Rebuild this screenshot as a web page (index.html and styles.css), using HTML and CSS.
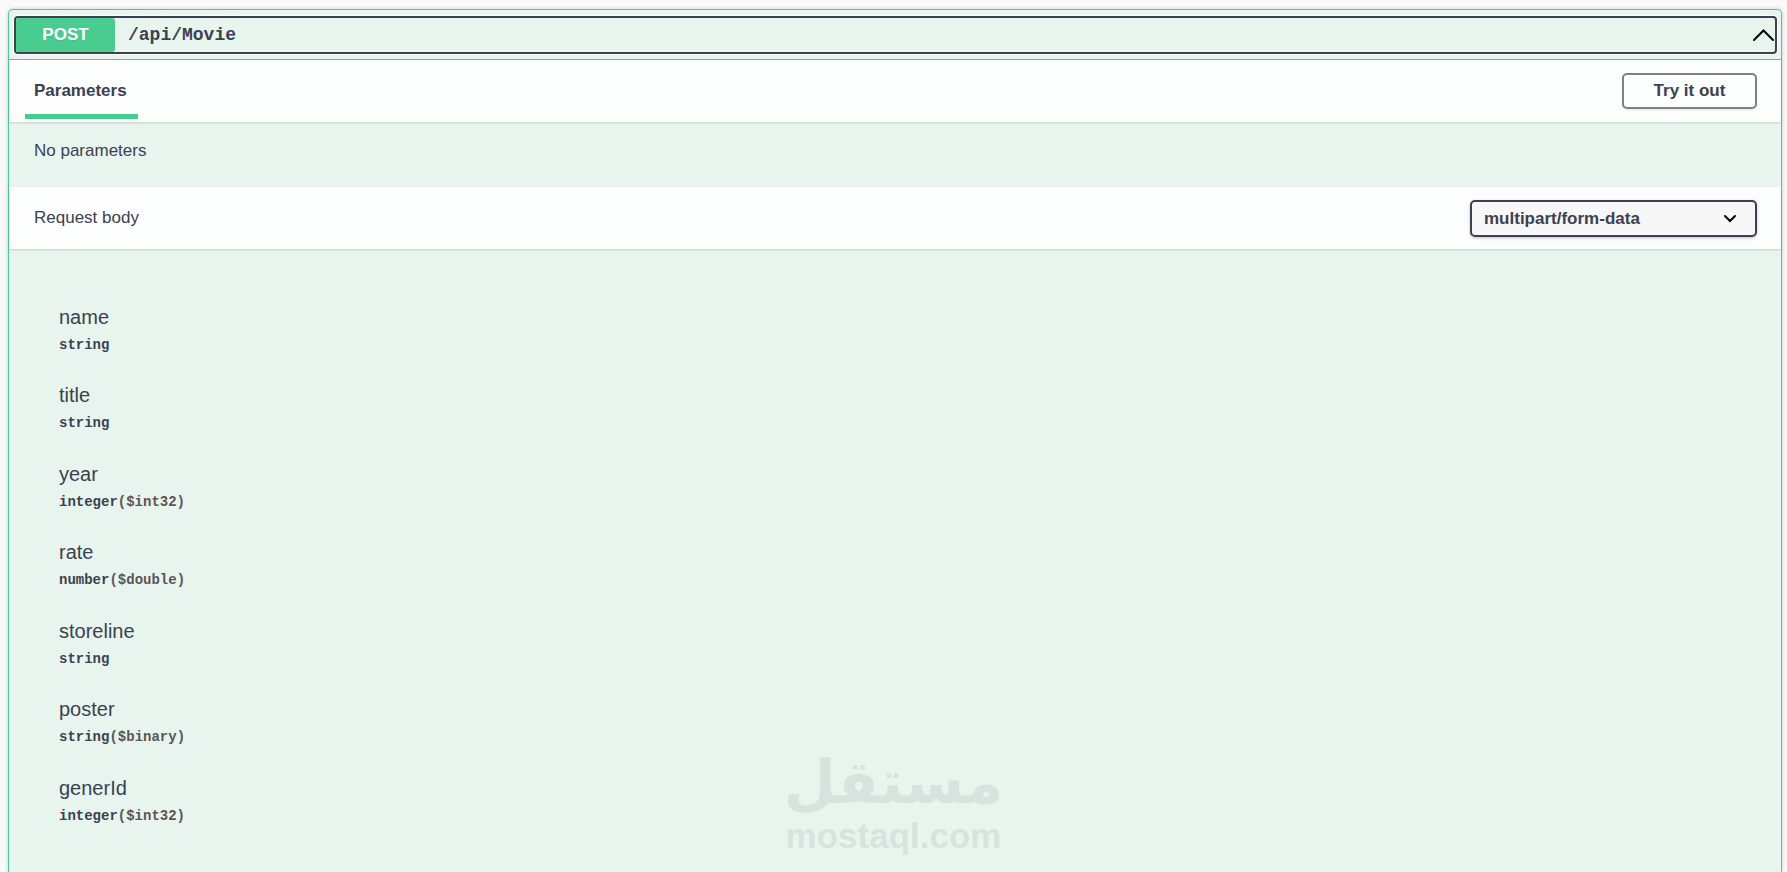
FILE: index.html
```html
<!DOCTYPE html>
<html lang="en">
<head>
    <meta charset="UTF-8">
    <meta name="viewport" content="width=device-width, initial-scale=1.0">
    <title>Movie API</title>
    <link rel="stylesheet" href="styles.css">
</head>
<body>
    <main class="opblock">
        <div class="opblock-summary">
            <button type="button" class="summary-control" aria-expanded="true">
                <span class="method">POST</span>
                <span class="path">/api/Movie</span>
                <svg class="arrow" width="22" height="14" viewBox="0 0 22 14" aria-hidden="true">
                    <path d="M1 12 L10.5 2.5 L20 12" fill="none" stroke="#000" stroke-width="2" stroke-linecap="round"/>
                </svg>
            </button>
        </div>

        <div class="section-header">
            <h4 class="tab-item">Parameters</h4>
            <button type="button" class="try-out">Try it out</button>
        </div>
        <div class="no-params">
            <p>No parameters</p>
        </div>

        <div class="section-header">
            <label class="body-label" for="content-type">Request body</label>
            <select id="content-type" class="content-type">
                <option>multipart/form-data</option>
            </select>
        </div>
        <div class="request-body">
            <table class="parameters">
                <tbody>
                    <tr>
                        <td>
                            <div class="param-name">name</div>
                            <div class="param-type">string</div>
                        </td>
                    </tr>
                    <tr>
                        <td>
                            <div class="param-name">title</div>
                            <div class="param-type">string</div>
                        </td>
                    </tr>
                    <tr>
                        <td>
                            <div class="param-name">year</div>
                            <div class="param-type">integer<span class="format">($int32)</span></div>
                        </td>
                    </tr>
                    <tr>
                        <td>
                            <div class="param-name">rate</div>
                            <div class="param-type">number<span class="format">($double)</span></div>
                        </td>
                    </tr>
                    <tr>
                        <td>
                            <div class="param-name">storeline</div>
                            <div class="param-type">string</div>
                        </td>
                    </tr>
                    <tr>
                        <td>
                            <div class="param-name">poster</div>
                            <div class="param-type">string<span class="format">($binary)</span></div>
                        </td>
                    </tr>
                    <tr>
                        <td>
                            <div class="param-name">generId</div>
                            <div class="param-type">integer<span class="format">($int32)</span></div>
                        </td>
                    </tr>
                </tbody>
            </table>
        </div>
    </main>

    <div class="watermark">
        <span class="watermark-ar" lang="ar" dir="rtl">مستقل</span>
        <span class="watermark-en">mostaql.com</span>
    </div>
</body>
</html>
```

FILE: styles.css
```css
* {
    box-sizing: border-box;
}
body {
    margin: 0;
    padding: 9px 5px 0 8px;
    background-color: #fafafa;
    color: #3b4151;
    font-family: "Liberation Sans", Arial, sans-serif;
    font-size: 17px;
}
button, select {
    font-family: inherit;
    color: inherit;
    cursor: pointer;
}
.opblock {
    min-height: calc(100vh - 9px);
    border: 1px solid #49cc90;
    border-bottom: none;
    border-radius: 5px 5px 0 0;
    background-color: #e7f5ee;
    box-shadow: 0 0 4px rgba(0, 0, 0, 0.19);
}

/* summary bar */
.opblock-summary {
    padding: 6px 4px 5px 5px;
    border-bottom: 1px solid #49cc90;
}
.summary-control {
    display: flex;
    align-items: center;
    width: 100%;
    height: 38px;
    padding: 0;
    border: 2px solid #3b4151;
    border-radius: 4px;
    background: none;
    box-shadow: 0 0 0 1px #fff;
}
.method {
    width: 99px;
    border-radius: 3px;
    background-color: #49cc90;
    color: #fff;
    font-size: 17px;
    font-weight: bold;
    line-height: 34px;
    text-align: center;
    text-shadow: 0 1px 0 rgba(0, 0, 0, 0.1);
}
.path {
    flex: 1;
    padding: 0 13px;
    font-family: "Liberation Mono", monospace;
    font-size: 18px;
    font-weight: bold;
    text-align: left;
}
.arrow {
    flex: none;
}

/* section headers */
.section-header {
    display: flex;
    align-items: center;
    justify-content: space-between;
    height: 62px;
    padding: 0 24px 0 16px;
    background-color: rgba(255, 255, 255, 0.85);
    box-shadow: 0 1px 2px rgba(0, 0, 0, 0.15);
}
.tab-item {
    align-self: flex-end;
    margin: 0 0 3px;
    padding: 0 11px 0 9px;
    border-bottom: 5px solid #49cc90;
    font-size: 17px;
    line-height: 46px;
}
.body-label {
    padding: 0 9px;
}
.try-out {
    width: 135px;
    height: 36px;
    border: 2px solid #808080;
    border-radius: 5px;
    background: transparent;
    box-shadow: 0 1px 2px rgba(0, 0, 0, 0.1);
    font-size: 17px;
    font-weight: bold;
}
.content-type {
    width: 287px;
    height: 37px;
    padding: 0 12px;
    border: 2px solid #3b4151;
    border-radius: 5px;
    appearance: none;
    background: #f7f7f7 url('data:image/svg+xml,<svg xmlns="http://www.w3.org/2000/svg" width="14" height="10" viewBox="0 0 14 10"><path d="M2 3 L7 8 L12 3" fill="none" stroke="black" stroke-width="2" stroke-linecap="round"/></svg>') no-repeat right 18px center;
    box-shadow: 0 1px 3px rgba(0, 0, 0, 0.25);
    font-size: 17px;
    font-weight: bold;
}
.no-params {
    height: 65px;
    padding: 19px 25px;
}
.no-params p {
    margin: 0;
    line-height: 20px;
}

/* request body fields */
.request-body {
    padding: 55px 50px 0;
}
.parameters {
    width: 100%;
    height: 549px;
    border-collapse: collapse;
}
.parameters td {
    padding: 0;
    vertical-align: top;
}
.param-name {
    font-size: 20px;
    line-height: 26px;
}
.param-type {
    padding-top: 6px;
    font-family: "Liberation Mono", monospace;
    font-size: 14px;
    font-weight: bold;
    line-height: 18px;
}
.format {
    color: #5c5455;
}

.watermark {
    position: fixed;
    right: 0;
    bottom: 16px;
    left: 0;
    display: flex;
    flex-direction: column;
    align-items: center;
    color: #d8e2df;
    font-weight: bold;
    pointer-events: none;
}
.watermark-ar {
    font-family: "DejaVu Sans", sans-serif;
    font-size: 60px;
    line-height: 68px;
}
.watermark-en {
    font-size: 35px;
    line-height: 40px;
}
```
